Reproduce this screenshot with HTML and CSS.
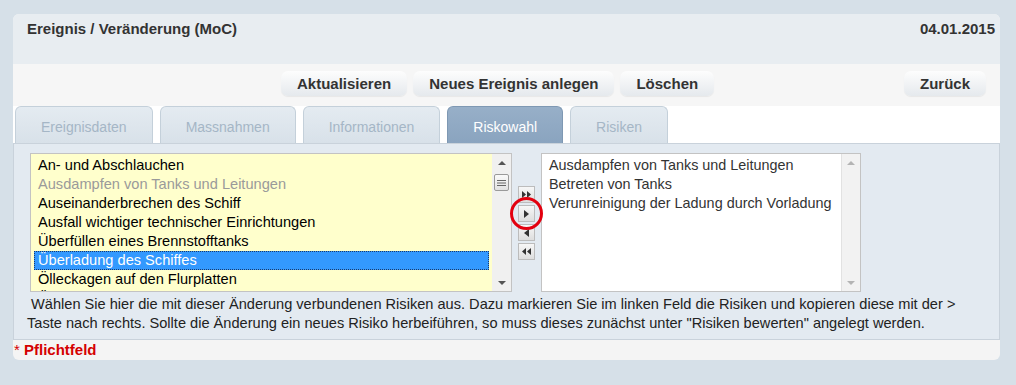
FILE: index.html
```html
<!DOCTYPE html>
<html lang="de">
<head>
  <meta charset="UTF-8">
  <title>Ereignis / Veränderung (MoC)</title>
  <link rel="stylesheet" href="styles.css">
</head>
<body>
  <div class="panel">
    <div class="head">
      <span class="title">Ereignis / Veränderung (MoC)</span>
      <span class="date">04.01.2015</span>
    </div>

    <div class="toolbar">
      <div class="group">
        <button class="btn">Aktualisieren</button>
        <button class="btn">Neues Ereignis anlegen</button>
        <button class="btn">Löschen</button>
      </div>
      <button class="btn back">Zurück</button>
    </div>

    <div class="tabs">
      <div class="tab">Ereignisdaten</div>
      <div class="tab">Massnahmen</div>
      <div class="tab">Informationen</div>
      <div class="tab active">Riskowahl</div>
      <div class="tab">Risiken</div>
    </div>

    <div class="content">
      <div class="pick">
        <div class="list left">
          <ul class="items">
            <li>An- und Abschlauchen</li>
            <li class="used">Ausdampfen von Tanks und Leitungen</li>
            <li>Auseinanderbrechen des Schiff</li>
            <li>Ausfall wichtiger technischer Einrichtungen</li>
            <li>Überfüllen eines Brennstofftanks</li>
            <li class="selected">Überladung des Schiffes</li>
            <li>Ölleckagen auf den Flurplatten</li>
            <li>Ölverschmutzung beim Bunkern</li>
          </ul>
          <div class="scroll">
            <span class="arrow up"></span>
            <span class="thumb">
              <svg width="9" height="8" viewBox="0 0 9 8"><path d="M0 1.5h9M0 4h9M0 6.5h9" stroke="#666" stroke-width="1"/></svg>
            </span>
            <span class="spacer"></span>
            <span class="arrow down"></span>
          </div>
        </div>

        <div class="moves">
          <button class="move"><svg width="9" height="7" viewBox="0 0 9 7"><path d="M0 0l4 3.5L0 7zM5 0l4 3.5L5 7z" fill="#333"/></svg></button>
          <button class="move"><svg width="5" height="8" viewBox="0 0 5 8"><path d="M0 0l5 4L0 8z" fill="#333"/></svg></button>
          <button class="move"><svg width="5" height="8" viewBox="0 0 5 8"><path d="M5 0L0 4l5 4z" fill="#333"/></svg></button>
          <button class="move"><svg width="9" height="7" viewBox="0 0 9 7"><path d="M4 0L0 3.5 4 7zM9 0L5 3.5 9 7z" fill="#333"/></svg></button>
          <span class="ring"></span>
        </div>

        <div class="list right">
          <ul class="items">
            <li>Ausdampfen von Tanks und Leitungen</li>
            <li>Betreten von Tanks</li>
            <li>Verunreinigung der Ladung durch Vorladung</li>
          </ul>
          <div class="scroll off">
            <span class="arrow up"></span>
            <span class="spacer"></span>
            <span class="arrow down"></span>
          </div>
        </div>
      </div>

      <p class="hint">&nbsp;Wählen Sie hier die mit dieser Änderung verbundenen Risiken aus. Dazu markieren Sie im linken Feld die Risiken und kopieren diese mit der &gt; Taste nach rechts. Sollte die Änderung ein neues Risiko herbeiführen, so muss dieses zunächst unter "Risiken bewerten" angelegt werden.</p>
    </div>

    <div class="foot"><span class="star">*</span> <strong>Pflichtfeld</strong></div>
  </div>
</body>
</html>
```

FILE: styles.css
```css
body {
  margin: 0;
  background-color: #d6e0e8;
  font-family: "Liberation Sans", Arial, sans-serif;
  font-size: 14.6px;
  color: #333;
}
.panel {
  width: 987px;
  margin: 14px 0 0 13px;
  border-radius: 6px;
  overflow: hidden;
  background-color: #f4f4f4;
}

/* header */
.head {
  height: 50px;
  box-sizing: border-box;
  padding: 6px 5px 0 14px;
  display: flex;
  justify-content: space-between;
  line-height: 17px;
  font-size: 15px;
  font-weight: bold;
  background-color: #e8edf1;
}

/* buttons */
.toolbar {
  height: 42px;
  box-sizing: border-box;
  padding: 7px 14px 0 268px;
  display: flex;
  background-color: #f6f6f6;
}
.group {
  display: flex;
  gap: 6px;
}
.btn {
  height: 25px;
  padding: 0 16px;
  border: none;
  border-radius: 7px;
  background: linear-gradient(#fdfdfd, #e5e9ed);
  box-shadow: 0 1px 1px rgba(0, 0, 0, 0.06);
  font-family: inherit;
  font-size: 15px;
  font-weight: bold;
  color: #333;
}
.back {
  margin-left: auto;
}

/* tabs */
.tabs {
  height: 37px;
  box-sizing: border-box;
  padding: 0 0 0 2px;
  display: flex;
  align-items: flex-end;
  gap: 7px;
  background-color: #fff;
}
.tab {
  height: 37px;
  box-sizing: border-box;
  padding: 12px 25px 0;
  line-height: 17px;
  font-size: 14px;
  color: #a5b6c6;
  background: linear-gradient(#e4ebf1, #d8e1e9);
  border: 1px solid #c4d0da;
  border-bottom: none;
  border-radius: 6px 6px 0 0;
}
.tab.active {
  color: #fff;
  background: linear-gradient(#97afc8, #8aa4bf);
  border-color: #7e98b3;
}

/* content */
.content {
  padding: 9px 30px 6px 16px;
  background-color: #e3eaf1;
  border: 1px solid #c9d2db;
}
.pick {
  display: flex;
  height: 139px;
}
.list {
  display: flex;
  box-sizing: border-box;
  border: 1px solid #c3c3c3;
  overflow: hidden;
}
.list.left {
  width: 482px;
  background-color: #ffffcc;
}
.list.right {
  width: 320px;
  background-color: #fff;
}
.items {
  flex: 1;
  list-style: none;
  margin: 0;
  padding: 2px 3px 0 3px;
  line-height: 19px;
  color: #000;
  white-space: nowrap;
  overflow: hidden;
}
.items li {
  padding-left: 4px;
}
.items li.used {
  color: #9a9a9a;
}
.items li.selected {
  color: #fff;
  background-color: #3399ff;
  outline: 1px dotted #1b3b6b;
  outline-offset: -1px;
}
.right .items {
  padding-left: 3px;
  font-size: 14.4px;
  color: #333;
}

/* scrollbars */
.scroll {
  width: 19px;
  flex-shrink: 0;
  display: flex;
  flex-direction: column;
  align-items: center;
  padding: 7px 0 6px;
  box-sizing: border-box;
  background-color: #f0f0f0;
}
.scroll .spacer {
  flex: 1;
}
.arrow {
  width: 0;
  height: 0;
  border-left: 4px solid transparent;
  border-right: 4px solid transparent;
}
.arrow.up {
  border-bottom: 4px solid #555;
}
.arrow.down {
  border-top: 4px solid #555;
}
.thumb {
  width: 13px;
  height: 15px;
  margin-top: 9px;
  display: flex;
  align-items: center;
  justify-content: center;
  border: 1px solid #9a9a9a;
  border-radius: 2px;
  background: linear-gradient(#fafafa, #e2e2e2);
}
.scroll.off {
  background-color: #f2f2f2;
  border-left: 1px solid #e2e2e2;
}
.scroll.off .arrow.up {
  border-bottom-color: #b4b4b4;
}
.scroll.off .arrow.down {
  border-top-color: #b4b4b4;
}

/* move buttons */
.moves {
  position: relative;
  width: 17px;
  margin: 33px 6px 0;
  display: flex;
  flex-direction: column;
  gap: 2px;
}
.move {
  width: 17px;
  height: 17px;
  padding: 0;
  display: flex;
  align-items: center;
  justify-content: center;
  border: 1px solid #bcbcbc;
  background: linear-gradient(#f7f7f7, #dedede);
}
.ring {
  position: absolute;
  left: -8px;
  top: 11px;
  width: 33px;
  height: 33px;
  box-sizing: border-box;
  border: 3px solid #e3000f;
  border-radius: 50%;
}

.hint {
  margin: 3px 0 0 -3px;
  line-height: 19px;
  color: #222;
}

.foot {
  height: 20px;
  padding-left: 1px;
  line-height: 20px;
  font-size: 15px;
  color: #d40000;
}
```
